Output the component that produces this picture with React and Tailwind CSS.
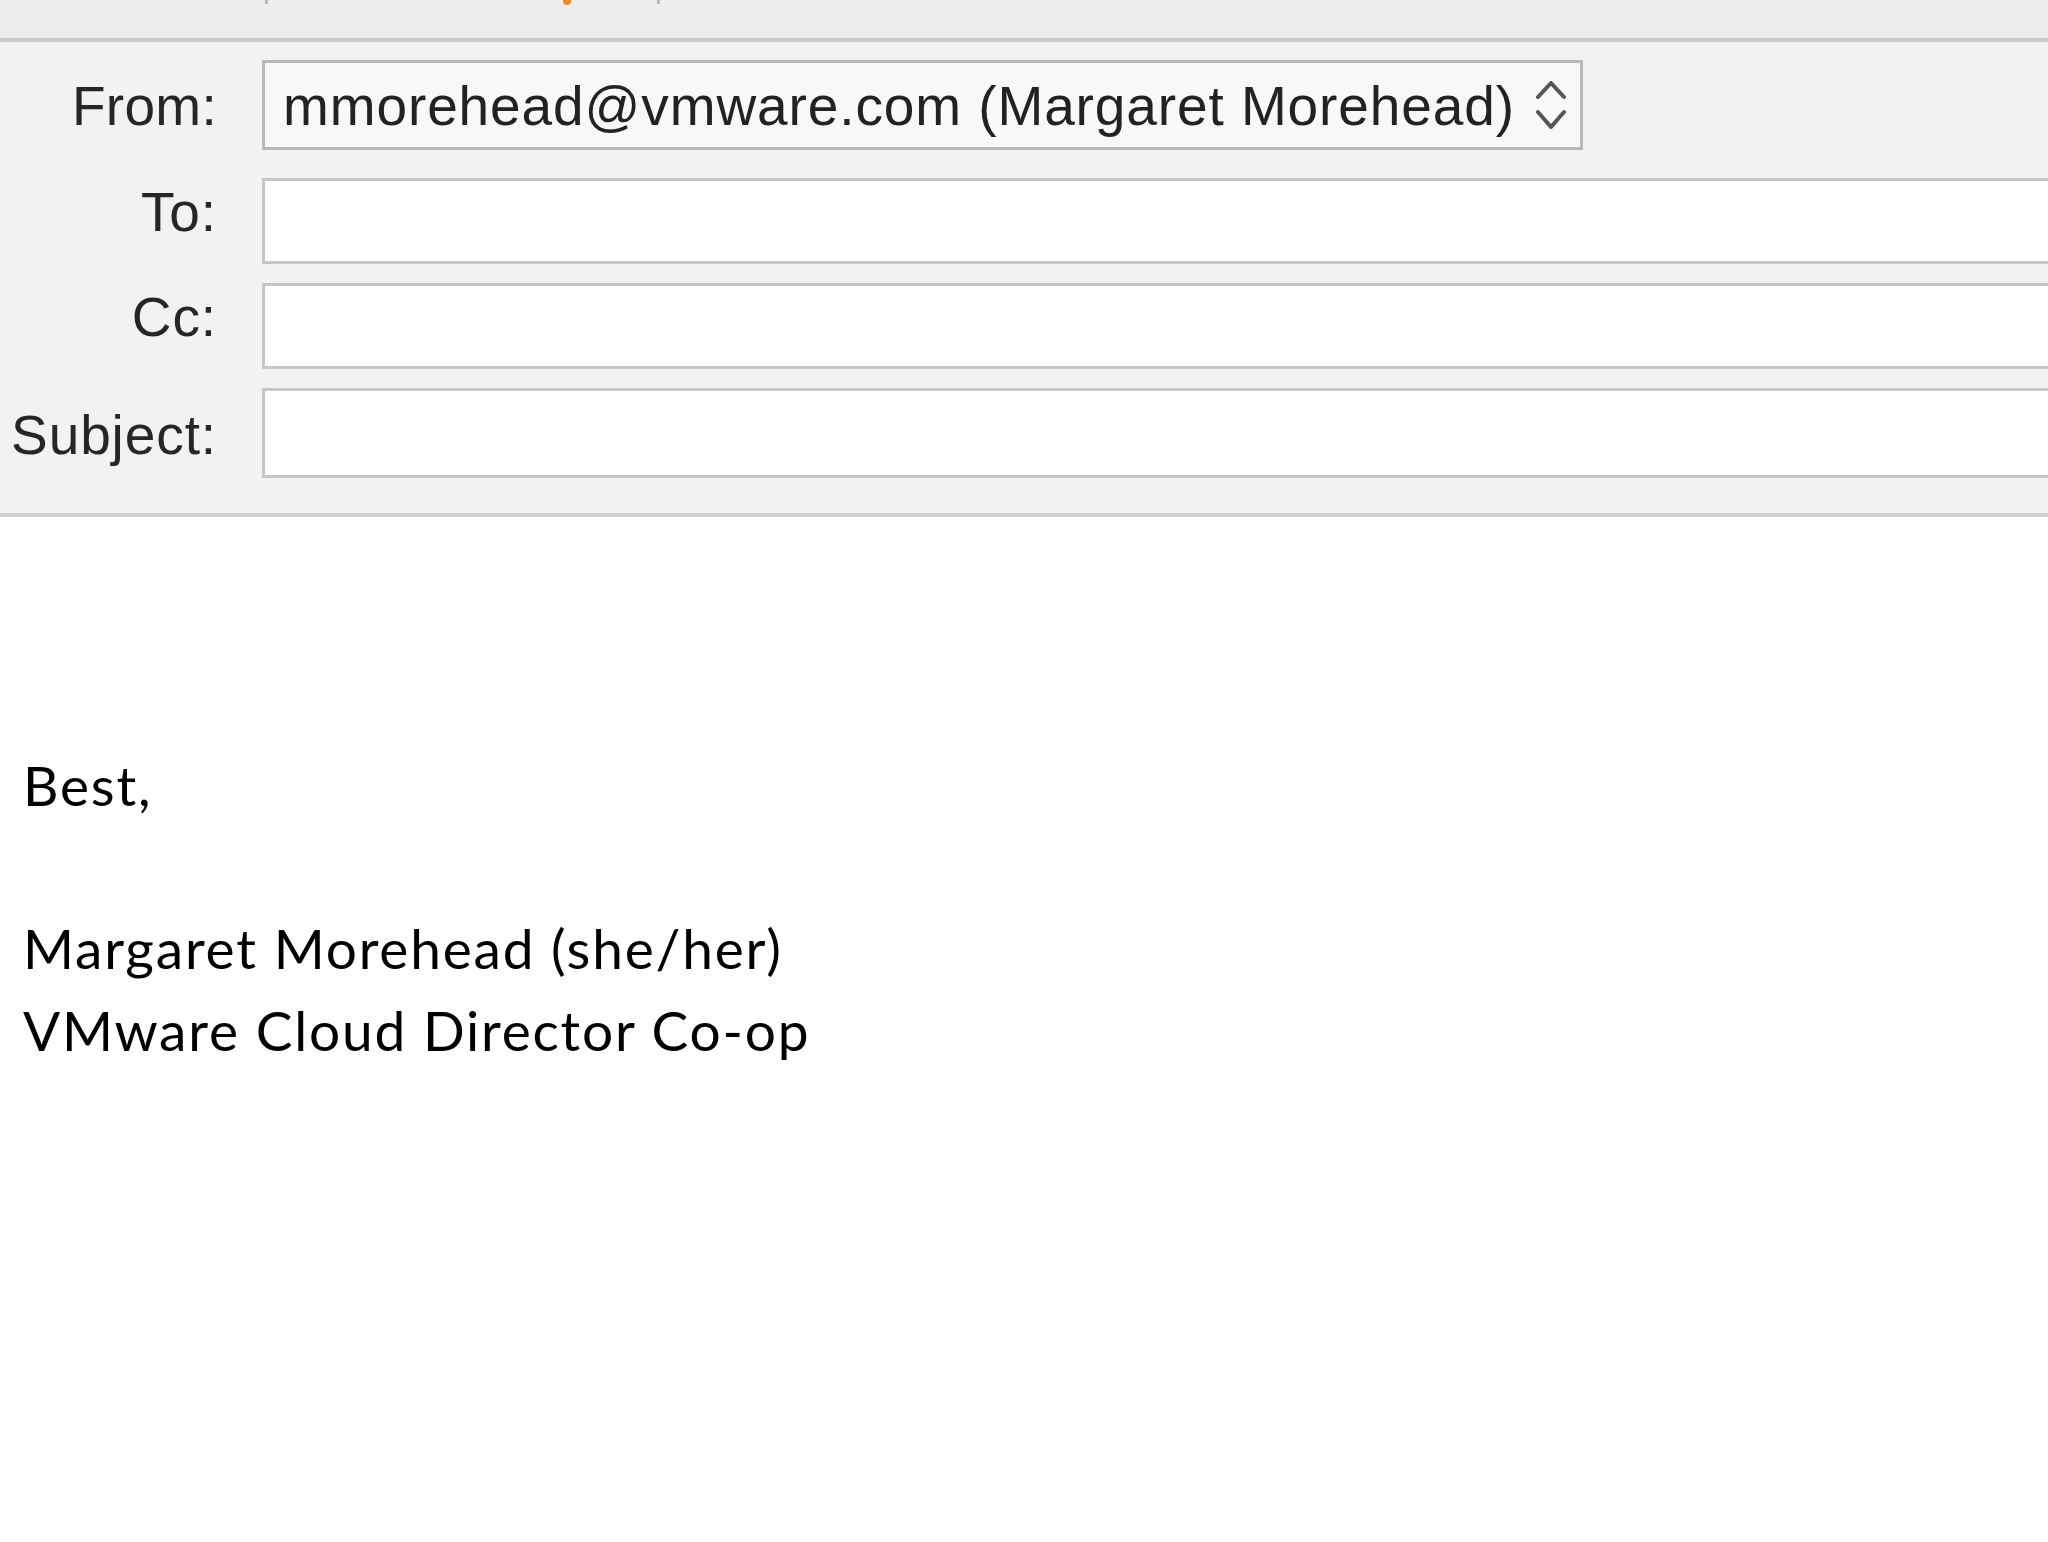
import React from 'react';

const labelFont = { fontFamily: '"Liberation Sans", Arial, sans-serif' };

function Chevrons() {
  return (
    <svg width="30" height="48" viewBox="0 0 30 48" fill="none" stroke="#555" strokeWidth="4" strokeLinecap="round" strokeLinejoin="round">
      <polyline points="2,16 15,2 28,16" />
      <polyline points="2,31 15,46 28,31" />
    </svg>
  );
}

function Field({ label, labelTop, height, mt }) {
  return (
    <div className={`flex ${mt}`}>
      <div className="w-[217px] shrink-0 text-right text-[55px] leading-[55px] tracking-[0.9px] text-[#262626]" style={{ paddingTop: labelTop }}>
        {label}
      </div>
      <div className={`ml-[45px] flex-1 bg-white border-l-[3px] border-y-[3px] border-[#c6c6c6] ${height}`}></div>
    </div>
  );
}

export default function App() {
  return (
    <div className="w-[2048px] h-[1542px] bg-white overflow-hidden" style={labelFont}>
      {/* toolbar remnant */}
      <div className="h-[38px] bg-[#ededed] flex items-start">
        <div className="ml-[265px] w-[3px] h-[4px] bg-[#b8b8b8]"></div>
        <div className="ml-[295px] w-[8px] h-[5px] rounded-b-full bg-[#f08a24]"></div>
        <div className="ml-[86px] w-[3px] h-[4px] bg-[#b8b8b8]"></div>
      </div>
      <div className="h-[4px] bg-[#cbcbcb]"></div>

      {/* header fields */}
      <div className="bg-[#f2f2f2] pt-[18px] pb-[35px] border-b-4 border-[#cfcfcf]">
        <div className="flex">
          <div className="w-[217px] shrink-0 text-right text-[55px] leading-[55px] tracking-[0.3px] text-[#262626] pt-[19px]">From:</div>
          <div className="ml-[45px] w-[1321px] h-[90px] border-[3px] border-[#b9b9b9] bg-[#f8f8f8] flex items-center justify-between pl-[18px] pr-[14px]">
            <span className="text-[55px] leading-[55px] tracking-[0.9px] text-[#222] pt-[2px]">mmorehead@vmware.com (Margaret Morehead)</span>
            <Chevrons />
          </div>
        </div>
        <Field label="To:" labelTop="7px" height="h-[86px]" mt="mt-[28px]" />
        <Field label="Cc:" labelTop="7px" height="h-[86px]" mt="mt-[19px]" />
        <Field label="Subject:" labelTop="20px" height="h-[90px]" mt="mt-[19px]" />
      </div>

      {/* message body */}
      <div className="pl-[23px] pt-[227px] text-[55px] leading-[82px] tracking-[1.8px] text-black" style={{ fontFamily: 'Lato, "Open Sans", sans-serif' }}>
        <div>Best,</div>
        <div className="h-[81px]"></div>
        <div>Margaret Morehead (she/her)</div>
        <div>VMware Cloud Director Co-op</div>
      </div>
    </div>
  );
}
